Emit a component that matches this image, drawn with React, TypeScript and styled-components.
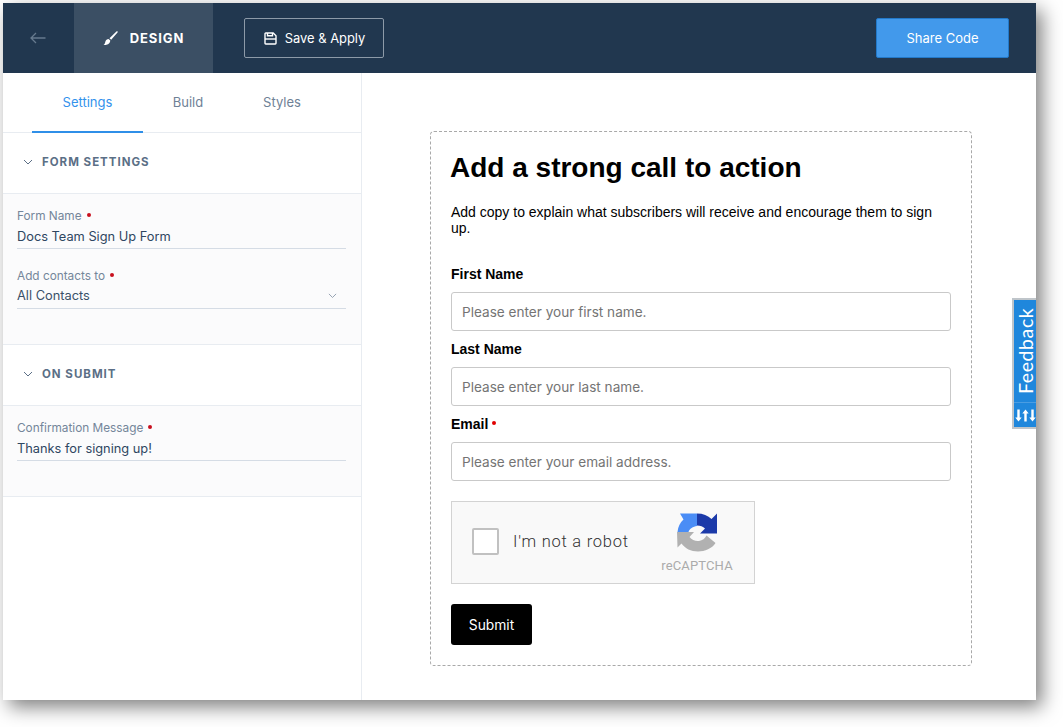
import React from "react";
import styled, { createGlobalStyle } from "styled-components";

const Global = createGlobalStyle`
  html, body { margin: 0; padding: 0; background: #fff; }
  body { font-family: Inter, "Liberation Sans", sans-serif; overflow: hidden; }
  * { box-sizing: border-box; }
`;
const Page = styled.div`
  width: 1063px;
  height: 727px;
  padding: 3px 0 0 3px;
`;
const Win = styled.div`
  position: relative;
  width: 1033px;
  height: 697px;
  display: flex;
  flex-direction: column;
  background: #fff;
  box-shadow: 6px 7px 18px rgba(0, 0, 0, 0.5);
`;
const Header = styled.header`
  height: 70px;
  flex: none;
  display: flex;
  align-items: center;
  background: #21374f;
  padding-right: 27px;
`;
const BackCell = styled.div`
  width: 71px;
  height: 100%;
  display: flex;
  align-items: center;
  justify-content: center;
  padding-right: 1px;
  color: #667a8e;
`;
const DesignTab = styled.div`
  width: 139px;
  height: 100%;
  display: flex;
  align-items: center;
  justify-content: center;
  gap: 12px;
  background: #3b4f64;
  color: #fff;
  font-size: 13px;
  font-weight: 700;
  letter-spacing: 0.9px;
`;
const SaveButton = styled.button`
  margin-left: 31px;
  width: 140px;
  height: 40px;
  display: flex;
  align-items: center;
  justify-content: center;
  gap: 8px;
  padding: 0 0 0 1px;
  background: transparent;
  border: 1px solid #8d9aa8;
  border-radius: 2px;
  color: #fff;
  font: 400 12.9px Inter, sans-serif;
`;
const ShareButton = styled.button`
  margin-left: auto;
  width: 133px;
  height: 40px;
  background: #4299eb;
  border: 1px solid #2379c9;
  border-radius: 2px;
  color: #fff;
  font: 400 13px Inter, sans-serif;
`;
const Body = styled.div`
  flex: 1;
  display: flex;
  min-height: 0;
`;
const Sidebar = styled.aside`
  width: 359px;
  flex: none;
  border-right: 1px solid #e8ecf1;
  display: flex;
  flex-direction: column;
`;
const Tabs = styled.nav`
  height: 60px;
  flex: none;
  display: flex;
  padding-left: 29px;
  border-bottom: 1px solid #e8ecf1;
`;
const Tab = styled.div<{ $active?: boolean; $w: number }>`
  width: ${(p) => p.$w}px;
  height: 60px;
  display: flex;
  align-items: center;
  justify-content: center;
  font-size: 13px;
  color: ${(p) => (p.$active ? "#3392ec" : "#6f8196")};
  border-bottom: 2px solid ${(p) => (p.$active ? "#2f8fe8" : "transparent")};
  padding-bottom: 1px;
`;
const SectionHead = styled.div`
  height: 61px;
  flex: none;
  display: flex;
  align-items: center;
  gap: 9px;
  padding: 0 0 3px 20px;
  border-bottom: 1px solid #e8ecf1;
  color: #5b6f86;
  font-size: 11.5px;
  font-weight: 700;
  letter-spacing: 1px;
`;
const Panel = styled.div<{ $h: number }>`
  height: ${(p) => p.$h}px;
  flex: none;
  padding: 14px 15px 0 14px;
  background: #fbfbfc;
  border-bottom: 1px solid #e8ecf1;
`;
const Field = styled.div`
  margin-bottom: 19px;
`;
const Label = styled.div`
  height: 16px;
  display: flex;
  align-items: center;
  gap: 5px;
  font-size: 11.8px;
  line-height: 16px;
  color: #74869a;
`;
const Dot = styled.span`
  width: 4px;
  height: 4px;
  margin-top: -3px;
  border-radius: 50%;
  background: #c8101e;
`;
const Value = styled.div<{ $select?: boolean }>`
  height: 25px;
  display: flex;
  align-items: center;
  justify-content: space-between;
  padding: 0 9px ${(p) => (p.$select ? 2 : 0)}px 0;
  border-bottom: 1px solid #d5dce5;
  font-size: 12.8px;
  color: ${(p) => (p.$select ? "#3a5068" : "#2e4661")};
`;
const SelectChevron = styled.span`
  display: flex;
  margin-top: 1px;
`;
const Canvas = styled.main`
  flex: 1;
  padding: 58px 64px 0 68px;
`;
const FormCard = styled.div`
  width: 542px;
  height: 535px;
  padding: 20px;
  border: 1px dashed #a9a9a9;
  border-radius: 4px;
  font-family: "Liberation Sans", Arial, sans-serif;
`;
const Title = styled.h1`
  margin: 0 0 0 -1px;
  font-size: 28px;
  line-height: 32px;
  font-weight: 700;
  color: #000;
`;
const Copy = styled.p`
  margin: 20px 0 0;
  font-size: 14px;
  line-height: 16px;
  color: #000;
`;
const FormLabel = styled.div<{ $first?: boolean }>`
  display: flex;
  align-items: center;
  gap: 4px;
  margin-top: ${(p) => (p.$first ? 30 : 10)}px;
  height: 16px;
  font-size: 14px;
  line-height: 16px;
  font-weight: 700;
  color: #000;
`;
const Star = styled.span`
  width: 4px;
  height: 4px;
  margin-top: -3px;
  border-radius: 50%;
  background: #e00000;
`;
const Input = styled.div`
  margin-top: 10px;
  height: 39px;
  display: flex;
  align-items: center;
  padding-left: 10px;
  border: 1px solid #c9c9c9;
  border-radius: 3px;
  background: #fff;
  font: 400 13.6px Inter, sans-serif;
  color: #747474;
`;
const Captcha = styled.div`
  position: relative;
  margin-top: 20px;
  width: 304px;
  height: 83px;
  display: flex;
  align-items: center;
  padding: 0 0 2px 20px;
  background: #f9f9f9;
  border: 1px solid #d3d3d3;
  font: 300 16.5px Roboto, sans-serif;
  letter-spacing: 0.75px;
  color: #333;
`;
const CheckBox = styled.span`
  width: 27px;
  height: 27px;
  margin: 0 14px 0 0;
  background: #fff;
  border: 2px solid #c1c1c1;
  border-radius: 2px;
`;
const CaptchaLogo = styled.div`
  position: absolute;
  right: 19px;
  top: 11px;
  width: 76px;
  display: flex;
  flex-direction: column;
  align-items: center;
  gap: 6px;
  font: 400 13px Roboto, sans-serif;
  letter-spacing: 0.15px;
  line-height: 15px;
  color: #ababab;
`;
const Submit = styled.button`
  display: block;
  margin-top: 20px;
  width: 81px;
  height: 41px;
  background: #000;
  border: none;
  border-radius: 3px;
  color: #fff;
  font: 400 13.8px Inter, sans-serif;
`;
const Feedback = styled.div`
  position: absolute;
  top: 295px;
  right: 0;
  width: 24px;
  height: 131px;
  display: flex;
  flex-direction: column;
  background: #1f87dc;
  border: 2px solid #bfc5ca;
  border-right: none;
  color: #fff;
`;
const FeedbackText = styled.div`
  height: 102px;
  display: flex;
  align-items: center;
  justify-content: center;
  writing-mode: vertical-rl;
  transform: rotate(180deg);
  font: 400 19.5px Lato, sans-serif;
  letter-spacing: 0.6px;
`;
const FeedbackIcons = styled.div`
  flex: 1;
  display: flex;
  align-items: center;
  justify-content: center;
  border-top: 1px solid #4a9de2;
`;

const Chevron = ({ size = 10, color = "#5b6f86" }: { size?: number; color?: string }) => (
  <svg width={size} height={size * 0.6} viewBox="0 0 10 6" fill="none">
    <path d="M1 1l4 4 4-4" stroke={color} strokeWidth="1" />
  </svg>
);

const Arrow = () => (
  <svg width="16" height="12" viewBox="0 0 16 12" fill="none" stroke="currentColor" strokeWidth="1.3">
    <path d="M15.5 6H1M6 1L1 6l5 5" />
  </svg>
);

const Brush = () => (
  <svg width="15" height="15" viewBox="0 0 15 15" fill="#fff">
    <path d="M14.6 0.4c.3.3.2.7-.1 1.100L8.200 8.800 6.500 7.200 13.400.6c.4-.4.900-.5 1.200-.2z" />
    <path d="M5.600 7.900l1.700 1.600c-.2 2.300-1.700 4.800-6.800 4.500 1.600-1 1.500-2.300 1.900-3.500.5-1.400 1.500-2.500 3.200-2.600z" />
  </svg>
);

const SaveIcon = () => (
  <svg width="13" height="13" viewBox="0 0 13 13" fill="none" stroke="#fff" strokeWidth="1.4">
    <path d="M1.700 1h7.500l2.800 2.700v7.600a.7.7 0 0 1-.7.700H1.700a.7.7 0 0 1-.7-.7V1.700a.7.7 0 0 1 .7-.7z" />
    <path d="M1 7h11" />
    <path d="M3.500 1v2.800h5V1" />
  </svg>
);

const RecaptchaMark = () => (
  <svg width="41" height="39" viewBox="0 0 41 39">
    <path fill="#b1b1b1" d="M0 19h17l-4.500 5c2.500 3 6 4.500 9.500 4 3.500-.5 6-2.500 7.500-5.500L38.500 30C35 35.500 28 38.500 21 38.500 14 38.500 8 35.500 4.500 30.500L0.500 34.500z" />
    <path fill="#4a8df6" d="M0.500 19C1 14 3 9.500 6.500 6.500L3 0.500H20V13C16 13.500 12.500 15.500 11.500 19z" />
    <path fill="#1c3aa9" d="M20 0.500C26 0.500 31 2.500 34.500 6L40 0.500V20.500H23L28 15.500C26 13.500 23.500 12.500 20 12.500z" />
  </svg>
);

const SortArrows = () => (
  <svg width="21" height="13" viewBox="0 0 21 13" fill="#fff">
    <path d="M2.300 .5h2.400v8h2L3.500 12.500.3 8.500h2zM9.300 12.500v-8h-2l3.200-4 3.200 4h-2v8zM16.300 .5h2.400v8h2l-3.200 4-3.200-4h2z" />
  </svg>
);

export default function App() {
  return (
    <Page>
      <Global />
      <Win>
        <Header>
          <BackCell>
            <Arrow />
          </BackCell>
          <DesignTab>
            <Brush />
            DESIGN
          </DesignTab>
          <SaveButton>
            <SaveIcon />
            Save &amp; Apply
          </SaveButton>
          <ShareButton>Share Code</ShareButton>
        </Header>
        <Body>
          <Sidebar>
            <Tabs>
              <Tab $active $w={111}>Settings</Tab>
              <Tab $w={90}>Build</Tab>
              <Tab $w={98}>Styles</Tab>
            </Tabs>
            <SectionHead>
              <Chevron />
              FORM SETTINGS
            </SectionHead>
            <Panel $h={151}>
              <Field>
                <Label>Form Name <Dot /></Label>
                <Value>Docs Team Sign Up Form</Value>
              </Field>
              <Field>
                <Label>Add contacts to <Dot /></Label>
                <Value $select>
                  All Contacts
                  <SelectChevron>
                    <Chevron size={9} color="#8b99aa" />
                  </SelectChevron>
                </Value>
              </Field>
            </Panel>
            <SectionHead>
              <Chevron />
              ON SUBMIT
            </SectionHead>
            <Panel $h={91}>
              <Field>
                <Label>Confirmation Message <Dot /></Label>
                <Value>Thanks for signing up!</Value>
              </Field>
            </Panel>
          </Sidebar>
          <Canvas>
            <FormCard>
              <Title>Add a strong call to action</Title>
              <Copy>Add copy to explain what subscribers will receive and encourage them to sign up.</Copy>
              <FormLabel $first>First Name</FormLabel>
              <Input>Please enter your first name.</Input>
              <FormLabel>Last Name</FormLabel>
              <Input>Please enter your last name.</Input>
              <FormLabel>Email <Star /></FormLabel>
              <Input>Please enter your email address.</Input>
              <Captcha>
                <CheckBox />
                I'm not a robot
                <CaptchaLogo>
                  <RecaptchaMark />
                  <span>reCAPTCHA</span>
                </CaptchaLogo>
              </Captcha>
              <Submit>Submit</Submit>
            </FormCard>
          </Canvas>
        </Body>
        <Feedback>
          <FeedbackText>Feedback</FeedbackText>
          <FeedbackIcons>
            <SortArrows />
          </FeedbackIcons>
        </Feedback>
      </Win>
    </Page>
  );
}
